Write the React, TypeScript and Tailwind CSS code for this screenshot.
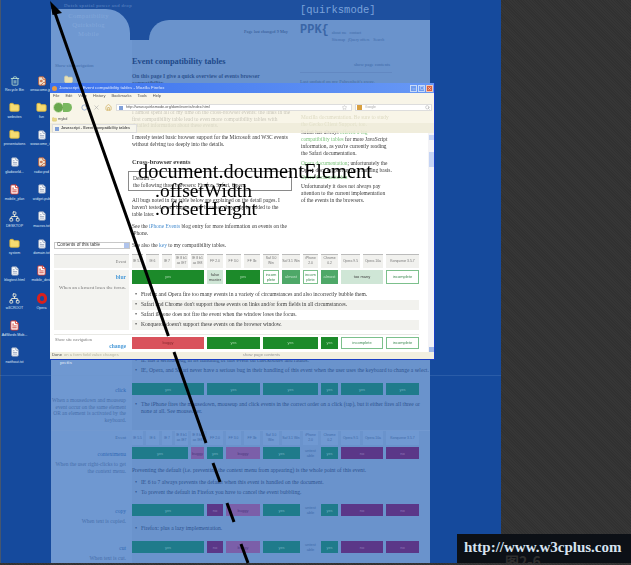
import { Folder, FileText, FileImage, Trash2, Network, Star, Search, Home, RotateCw, X, Minus, Square } from 'lucide-react';

type Kind = 'yes' | 'no' | 'buggy' | 'untest' | 'fail' | 'light' | 'almost' | 'incomplete';
type Cell = { span: number; kind: Kind; text: string };

const serif = 'font-["Liberation_Serif",serif]';
const grid15 = 'grid grid-cols-[11px_13px_10px_13px_13px_16px_15px_16px_16px_18px_15px_17px_19px_20px_33px] gap-x-[3px]';

const spans: Record<number, string> = {
  1: 'col-span-1',
  2: 'col-span-2',
  3: 'col-span-3',
  4: 'col-span-4',
  5: 'col-span-5',
};

const pageCell: Record<Kind, string> = {
  yes: 'bg-[#1f7b8b] text-[#6fb0c0]',
  no: 'bg-[#5b3788] text-[#9078b8]',
  buggy: 'bg-[#7b5fa9] text-[#4d3a80]',
  untest: 'text-[#3f6cab]',
  fail: 'bg-[#5b3788]',
  light: '',
  almost: '',
  incomplete: '',
};

const windowCell: Record<Kind, string> = {
  yes: 'bg-[#1c8a2a] text-[#a5d6aa]',
  no: 'bg-[#5b3788]',
  buggy: 'bg-[#7b5fa9]',
  untest: 'text-[#555]',
  fail: 'bg-[#d9525c] text-[#8a2a30]',
  light: 'bg-[#cfe6d6] text-[#444]',
  almost: 'bg-[#4ea868] text-[#c3e5cc]',
  incomplete: 'bg-white border border-[#7cc08c] text-[#3d8a52]',
};

const headers = ['IE 5.5', 'IE 6', 'IE 7', 'IE 8 b1 as IE7', 'IE 8 b1 as IE8', 'FF 2.0', 'FF 3.0', 'FF 3b', 'Saf 3.0 Win', 'Saf 3.1 Win', 'iPhone 2.0', 'Chrome 0.2', 'Opera 9.5', 'Opera 10a', 'Konqueror 3.5.7'];

const blurCells: Cell[] = [
  { span: 5, kind: 'yes', text: 'yes' },
  { span: 1, kind: 'light', text: 'false master' },
  { span: 2, kind: 'yes', text: 'yes' },
  { span: 1, kind: 'incomplete', text: 'incom plete' },
  { span: 1, kind: 'almost', text: 'almost' },
  { span: 1, kind: 'incomplete', text: 'incom plete' },
  { span: 1, kind: 'almost', text: 'almost' },
  { span: 2, kind: 'light', text: 'too many' },
  { span: 1, kind: 'incomplete', text: 'incomplete' },
];

const changeCells: Cell[] = [
  { span: 5, kind: 'fail', text: 'buggy' },
  { span: 3, kind: 'yes', text: 'yes' },
  { span: 3, kind: 'yes', text: 'yes' },
  { span: 1, kind: 'yes', text: 'yes' },
  { span: 2, kind: 'incomplete', text: 'incomplete' },
  { span: 1, kind: 'incomplete', text: 'incomplete' },
];

const clickCells: Cell[] = [
  { span: 5, kind: 'yes', text: 'yes' },
  { span: 3, kind: 'yes', text: 'yes' },
  { span: 3, kind: 'yes', text: 'yes' },
  { span: 1, kind: 'yes', text: 'yes' },
  { span: 2, kind: 'yes', text: 'yes' },
  { span: 1, kind: 'yes', text: 'yes' },
];

const contextCells: Cell[] = [
  { span: 4, kind: 'yes', text: 'yes' },
  { span: 1, kind: 'buggy', text: 'buggy' },
  { span: 1, kind: 'yes', text: 'yes' },
  { span: 2, kind: 'buggy', text: 'buggy' },
  { span: 2, kind: 'yes', text: 'yes' },
  { span: 1, kind: 'untest', text: 'untest able' },
  { span: 1, kind: 'yes', text: 'yes' },
  { span: 2, kind: 'no', text: 'no' },
  { span: 1, kind: 'no', text: 'no' },
];

const copyCells: Cell[] = [
  { span: 5, kind: 'yes', text: 'yes' },
  { span: 1, kind: 'no', text: 'no' },
  { span: 2, kind: 'buggy', text: 'buggy' },
  { span: 2, kind: 'yes', text: 'yes' },
  { span: 1, kind: 'untest', text: 'untest able' },
  { span: 1, kind: 'yes', text: 'yes' },
  { span: 2, kind: 'no', text: 'no' },
  { span: 1, kind: 'no', text: 'no' },
];

const desktopIcons: { label: string; kind: 'trash' | 'folder' | 'file' | 'image' | 'pdf' | 'net' | 'opera' | 'none' }[] = [
  { label: 'Recycle Bin', kind: 'trash' },
  { label: 'onsacome.jpg', kind: 'image' },
  { label: 'websites', kind: 'folder' },
  { label: 'fun', kind: 'folder' },
  { label: 'presentations', kind: 'folder' },
  { label: 'wwwcome_i...', kind: 'file' },
  { label: 'gladworld...', kind: 'file' },
  { label: 'radar.psd', kind: 'image' },
  { label: 'mobile_plan', kind: 'pdf' },
  { label: 'widget.pub', kind: 'file' },
  { label: 'DESKTOP', kind: 'net' },
  { label: 'macros.txt', kind: 'file' },
  { label: 'system', kind: 'folder' },
  { label: 'domain.txt', kind: 'file' },
  { label: 'blogtest.html', kind: 'file' },
  { label: 'mobile_desk', kind: 'pdf' },
  { label: 'w3CROOT', kind: 'net' },
  { label: 'Opera', kind: 'opera' },
  { label: 'AdWords Mob...', kind: 'pdf' },
  { label: '', kind: 'none' },
  { label: 'nwithout.txt', kind: 'file' },
];

function DesktopIcon({ label, kind }: { label: string; kind: string }) {
  return (
    <div className="flex flex-col items-center">
      <div className="h-[11px] flex items-center justify-center">
        {kind === 'trash' && <Trash2 className="w-[10px] h-[10px] text-[#bfe3d0]" />}
        {kind === 'folder' && <Folder className="w-[11px] h-[11px] text-[#e0b93c] fill-[#f6dc72]" />}
        {kind === 'file' && <FileText className="w-[10px] h-[10px] text-[#8a9ab8] fill-white" />}
        {kind === 'image' && <FileImage className="w-[10px] h-[10px] text-[#c05a30] fill-[#f0e4d0]" />}
        {kind === 'pdf' && <FileText className="w-[11px] h-[11px] text-[#d03a30] fill-white" />}
        {kind === 'net' && <Network className="w-[11px] h-[11px] text-[#e8e8d8]" />}
        {kind === 'opera' && <div className="w-[10px] h-[11px] rounded-full border-[3px] border-[#d8201c]" />}
      </div>
      <span className="mt-[2px] text-[3.6px] leading-[5px] text-[#dfe8f5] whitespace-nowrap font-['Liberation_Sans',sans-serif]">{label}</span>
    </div>
  );
}

function Bars({ cells, palette, height = 'h-[12px]' }: { cells: Cell[]; palette: Record<Kind, string>; height?: string }) {
  return (
    <div className={grid15}>
      {cells.map((c, i) => (
        <div key={i} className={`${spans[c.span]} ${palette[c.kind]} ${height} flex items-center justify-center text-center text-[4px] leading-[5px] font-['Liberation_Sans',sans-serif]`}>
          {c.text}
        </div>
      ))}
    </div>
  );
}

function HeaderCells({ tone }: { tone: string }) {
  return (
    <div className={grid15}>
      {headers.map((h) => (
        <div key={h} className={`${tone} h-[14px] flex items-center justify-center text-center text-[3.4px] leading-[5px] font-['Liberation_Sans',sans-serif]`}>
          {h}
        </div>
      ))}
    </div>
  );
}

function Bullet({ children, shaded }: { children: React.ReactNode; shaded?: string }) {
  return (
    <div className={`flex h-[10px] items-center pl-[3px] w-[287px] ${shaded ?? ''}`}>
      <span className="w-[6px] shrink-0 text-[6px]">•</span>
      <span className="whitespace-nowrap">{children}</span>
    </div>
  );
}

function PageRow({ title, desc, cells, className, children }: { title: string; desc: string[]; cells: Cell[]; className: string; children?: React.ReactNode }) {
  return (
    <div className={`flex ${className}`}>
      <div className="w-[75px] text-right pt-[3px] shrink-0 text-[#476fab]">
        <div className="text-[#2f68b4] text-[5.5px] leading-[8px] mb-[3px]">{title}</div>
        {desc.map((d) => (
          <div key={d} className="text-[5.4px] leading-[6.5px] whitespace-nowrap">{d}</div>
        ))}
      </div>
      <div className="ml-[6px] flex-1 min-w-0">
        <Bars cells={cells} palette={pageCell} />
        {children}
      </div>
    </div>
  );
}

function PageBehind() {
  return (
    <div className={`w-[379px] h-[563px] shrink-0 bg-[#6a93cc] flex flex-col overflow-hidden text-[5.6px] leading-[7px] text-[#2f5490] ${serif}`}>
      {/* header with the two curved tabs */}
      <div className="h-[40px] bg-[#1e509f] flex shrink-0">
        <div className="w-[79px] shrink-0 flex flex-col">
          <div className="h-[14px] pl-[13px] pt-[2px] text-[#5f88c4] text-[4.8px] tracking-[0.4px] whitespace-nowrap">Dutch spatial power and drop</div>
          <div className="flex-1 bg-[#6f98d1] rounded-tr-[24px] pt-[2px] pr-[4px] text-center text-[6.6px] leading-[9px] tracking-[0.3px] text-[#82a7da]">
            <div>Compatibility</div>
            <div>Quirksblog</div>
            <div>Mobile</div>
            <div>about</div>
          </div>
        </div>
        <div className="w-[19px] shrink-0" />
        <div className="flex-1 min-w-0 flex flex-col">
          <div className="h-[20px] pl-[151px] flex items-center text-[#7aa2da] text-[10.5px] font-['Liberation_Mono',monospace] whitespace-nowrap">[quirksmode]</div>
          <div className="h-[20px] bg-[#6a93cc] rounded-tl-[24px] flex items-start">
            <div className="w-[139px] shrink-0 pt-[9px] text-right text-[4.4px] leading-[6px] whitespace-nowrap">Page last changed 9 May</div>
            <div className="ml-[12px] shrink-0 pt-[2px] text-[#3a66a6] text-[12px] leading-[16px] font-['Liberation_Mono',monospace] font-bold">PPK&#123;</div>
            <div className="ml-[3px] pt-[9px] text-[4px] leading-[7px] whitespace-nowrap text-[#3f6aa8]">
              <div>about me &nbsp; contact</div>
              <div>Sitemap &nbsp; jQuery offers &nbsp;&nbsp; Search</div>
            </div>
          </div>
        </div>
      </div>
      {/* top of page, mostly under the window */}
      <div className="h-[315px] shrink-0 flex">
        <div className="w-[81px] shrink-0 bg-[#6f98d1] pl-[4px] pt-[22px] text-[#3f6aa8]">
          <div className="text-[4.6px]">Show site navigation</div>
          <Folder className="w-[9px] h-[9px] ml-[9px] mt-[6px] text-[#e0d8a8] fill-[#e8e0b4]" />
        </div>
        <div className="w-[165px] shrink-0 pt-[16px]">
          <div className="text-[8.4px] leading-[11px] font-bold text-[#1f4a8a] whitespace-nowrap">Event compatibility tables</div>
          <div className="mt-[6px] font-bold text-[5.5px] leading-[6.5px] whitespace-nowrap">On this page I give a quick overview of events browser</div>
          <div className="font-bold text-[5.5px] leading-[6.5px]">compatibility.</div>
        </div>
        <div className="flex-1 min-w-0 pl-[3px] pt-[21px] text-[#3f6aa8]">
          <div className="text-right pr-[40px] text-[4.6px] whitespace-nowrap">show page contents</div>
          <div className="w-[92px] h-px mt-[4px] bg-[#6288c2]" />
          <div className="mt-[5px] text-[4.8px] whitespace-nowrap">Last updated on my Fahrenheit's away.</div>
        </div>
      </div>
      {/* last bullets of the row behind the window's lower edge */}
      <div className="h-[20px] shrink-0 flex bg-[#6a93cc] overflow-hidden">
        <div className="w-[81px] shrink-0 bg-[#6f98d1] pl-[9px] text-[#e6eef8] text-[5px] pt-[4px]">prefix</div>
        <div className="flex-1 min-w-0 whitespace-nowrap">
          <Bullet>IE has a serious bug in its handling of this event on checkboxes and radios.</Bullet>
          <Bullet>IE, Opera, and Safari never have a serious bug in their handling of this event when the user uses the keyboard to change a select.</Bullet>
        </div>
      </div>
      {/* table rows */}
      <div className="flex-1 min-h-0 pt-[8px] bg-[linear-gradient(90deg,#6f98d1_81px,#6a93cc_81px)]">
        <PageRow
          title="click"
          desc={['When a mousedown and mouseup', 'event occur on the same element', 'OR an element is activated by the', 'keyboard.']}
          cells={clickCells}
          className="h-[47px]"
        >
          <div className="pt-[6px] pl-[3px] flex">
            <span className="w-[6px] text-[6px]">•</span>
            <div className="w-[280px]">The iPhone fires the mousedown, mouseup and click events in the correct order on a click (tap), but it either fires all three or none at all. See mouseover.</div>
          </div>
        </PageRow>
        <div className="h-[17px] flex border-t border-[#7299d0]">
          <div className="w-[75px] text-right text-[#3f6aa8] text-[4.6px] leading-[14px]">Event</div>
          <div className="ml-[6px] flex-1"><HeaderCells tone="bg-[#7099d2] text-[#3f6aa8]" /></div>
        </div>
        <PageRow
          title="contextmenu"
          desc={['When the user right-clicks to get', 'the context menu.']}
          cells={contextCells}
          className="h-[57px]"
        >
          <div className="pt-[8px] whitespace-nowrap">Preventing the default (i.e. preventing the context menu from appearing) is the whole point of this event.</div>
          <div className="pt-[3px]">
            <Bullet>IE 6 to 7 always prevents the default when this event is handled on the document.</Bullet>
            <Bullet>To prevent the default in Firefox you have to cancel the event bubbling.</Bullet>
          </div>
        </PageRow>
        <PageRow title="copy" desc={['When text is copied.']} cells={copyCells} className="h-[37px]">
          <div className="pt-[7px]">
            <Bullet>Firefox: plus a lazy implementation.</Bullet>
          </div>
        </PageRow>
        <PageRow title="cut" desc={['When text is cut.']} cells={copyCells} className="h-[22px]" />
      </div>
    </div>
  );
}

function FirefoxWindow() {
  return (
    <div className={`absolute left-[50px] top-[83px] w-[385px] h-[277px] flex flex-col border-r-[1.5px] border-b-[1.5px] border-[#1a3fc4] overflow-hidden ${serif}`}>
      {/* title bar */}
      <div className="h-[10px] shrink-0 bg-[linear-gradient(90deg,#3b72ee,#6798f5)] flex items-center pl-[2px] pr-[1px]">
        <div className="w-[5px] h-[5px] rounded-full bg-[#e89a40] mr-[2px]" />
        <span className="text-[4.4px] text-[#dfe9fb] whitespace-nowrap font-['Liberation_Sans',sans-serif]">Javascript - Event compatibility tables - Mozilla Firefox</span>
        <div className="ml-auto flex gap-[1px]">
          <div className="w-[7px] h-[7px] bg-[#6f9cf0] border border-[#c8daf8] flex items-end justify-center"><Minus className="w-[4px] h-[4px] text-white" /></div>
          <div className="w-[7px] h-[7px] bg-[#6f9cf0] border border-[#c8daf8] flex items-center justify-center"><Square className="w-[4px] h-[4px] text-white" /></div>
          <div className="w-[7px] h-[7px] bg-[#d8623f] border border-[#f0c8b8] flex items-center justify-center"><X className="w-[5px] h-[5px] text-white" /></div>
        </div>
      </div>

      {/* page content, the chrome lies over the top part of it */}
      <div className="relative flex-1 min-h-0 bg-white flex flex-col text-[5.4px] leading-[6.7px] text-[#3a3a3a] pl-[82px] pr-[15px] pt-[16px]">
        <div className="flex gap-[1px]">
          <div className="w-[165px] shrink-0">
            <div className="whitespace-nowrap text-[#3a3a3a]">
              <div>I almost spent all of my time on the cross-browser events: the links in the</div>
              <div>first compatibility table lead to even more compatibility tables with</div>
              <div>detailed information about these events.</div>
            </div>
            <div className="mt-[5px] whitespace-nowrap">
              <div>I merely tested basic browser support for the Microsoft and W3C events</div>
              <div>without delving too deeply into the details.</div>
            </div>
            <div className="mt-[11px] font-bold text-[6.4px] whitespace-nowrap">Cross-browser events</div>
            <div className="-ml-[4px] w-[164px] mt-[6px] h-[20px] border border-[#8a8a8a] pl-[4px] pt-[3px] whitespace-nowrap">
              <div>Default ...</div>
              <div>the following three browsers: Firefox, Safari, Opera.</div>
            </div>
            <div className="mt-[6px] whitespace-nowrap">
              <div>All bugs noted in the table below are explained on the detail pages. I</div>
              <div>haven't tested every bug in every browser; they may be added to the</div>
              <div>table later.</div>
            </div>
            <div className="mt-[6px] whitespace-nowrap">
              <div>See the <span className="text-[#4a8fd0]">iPhone Events</span> blog entry for more information on events on the</div>
              <div>iPhone.</div>
            </div>
          </div>
          <div className="flex-1 min-w-0 pl-[3px] pt-[5px] text-[#3a3a3a] whitespace-nowrap">
            <div className="text-[#8f8f60]">Mozilla documentation. Be sure to study</div>
            <div className="text-[#8f8f60]">the Gecko Client Support, too.</div>
            <div className="mt-[2px]">Safari has always <span className="text-[#7cc47c]">offered a big</span></div>
            <div><span className="text-[#7cc47c]">compatibility tables</span> for more JavaScript</div>
            <div>information, as you're currently reading</div>
            <div>the Safari documentation.</div>
            <div className="mt-[4px]"><span className="text-[#7cc47c]">Opera documentation</span>; unfortunately the</div>
            <div>Opera docs support up on a running basis.</div>
            <div className="text-[#7cc47c]">Opera documentation</div>
            <div className="mt-[3px]">Unfortunately it does not always pay</div>
            <div>attention to the current implementation</div>
            <div>of the events in the browsers.</div>
          </div>
        </div>

        <div className="-ml-[78px] mt-[5px] flex items-center h-[8px] shrink-0">
          <div className="w-[76px] h-[7px] border border-[#c8c8c8] flex items-center pl-[2px] text-[4.6px] justify-between font-['Liberation_Sans',sans-serif]">
            Contents of this table
            <span className="w-[5px] h-[5px] bg-[#b0c4ec] block" />
          </div>
          <span className="ml-[2px] whitespace-nowrap">See also the <span className="text-[#4a8fd0]">key</span> to my compatibility tables.</span>
        </div>

        <div className="-ml-[78px] mt-[4px] flex shrink-0">
          <div className="w-[75px] h-[14px] bg-[#f1f1ee] border-t border-[#d8d8d8] text-right pr-[3px] text-[4.4px] leading-[13px] text-[#777]">Event</div>
          <div className="ml-[3px]"><HeaderCells tone="bg-[#f1f1ee] border-t border-[#bbb] text-[#777]" /></div>
        </div>

        <div className="-ml-[78px] mt-[2px] flex shrink-0 h-[60px] text-[5.5px]">
          <div className="w-[75px] bg-[#f3f3f0] text-right pr-[3px] pt-[4px] text-[#777]">
            <div className="text-[#4a9ad8] font-bold text-[5.6px] leading-[7px]">blur</div>
            <div className="mt-[4px] text-[5px] whitespace-nowrap">When an element loses the focus.</div>
          </div>
          <div className="ml-[3px]">
            <Bars cells={blurCells} palette={windowCell} height="h-[14px]" />
            <div className="mt-[6px] flex flex-col">
              <Bullet>Firefox and Opera fire too many events in a variety of circumstances and also incorrectly bubble them.</Bullet>
              <Bullet shaded="bg-[#f2f2ee]">Safari and Chrome don't support these events on links and/or form fields in all circumstances.</Bullet>
              <Bullet>Safari iPhone does not fire the event when the window loses the focus.</Bullet>
              <Bullet shaded="bg-[#f2f2ee]">Konqueror doesn't support these events on the browser window.</Bullet>
            </div>
          </div>
        </div>

        <div className="-ml-[78px] mt-[4px] flex shrink-0 border-t border-[#e8e8e4] pt-[2px]">
          <div className="w-[75px] pl-[1px] text-[#777]">
            <div className="text-[4.4px] whitespace-nowrap">Show site navigation</div>
            <div className="text-right pr-[3px] text-[#4a9ad8] font-bold text-[5.6px]">change</div>
          </div>
          <div className="ml-[3px]">
            <Bars cells={changeCells} palette={windowCell} />
          </div>
        </div>

        {/* browser chrome over the content */}
        <div className="absolute left-0 right-0 top-0 h-[40px] flex flex-col bg-[#f5f2e0]/75 text-[#555] font-['Liberation_Sans',sans-serif]">
          <div className="h-[7px] flex items-center gap-[6px] pl-[3px] text-[4px] whitespace-nowrap">
            <span>File</span><span>Edit</span><span>View</span><span>History</span><span>Bookmarks</span><span>Tools</span><span>Help</span>
          </div>
          <div className="h-[15px] flex items-center pl-[3px] pr-[2px]">
            <div className="w-[11px] h-[11px] rounded-full bg-[#6aa84f] border border-[#d8e8c0]" />
            <div className="w-[9px] h-[9px] rounded-r-full bg-[#7ab860] -ml-[1px]" />
            <RotateCw className="w-[7px] h-[7px] ml-[9px] text-[#5f84c8]" />
            <X className="w-[7px] h-[7px] ml-[5px] text-[#aaa]" />
            <Home className="w-[7px] h-[7px] ml-[5px] text-[#c8a040]" />
            <div className="ml-[4px] h-[7px] w-[236px] bg-white border border-[#ddd] flex items-center pl-[2px] text-[3.8px] whitespace-nowrap">
              <span className="w-[4px] h-[4px] bg-[#7f9fd8] mr-[3px]" />
              http://www.quirksmode.org/dom/events/index.html
              <Star className="ml-auto mr-[4px] w-[5px] h-[5px] text-[#aaa]" />
            </div>
            <div className="ml-[3px] h-[7px] flex-1 bg-white border border-[#ddd] flex items-center pl-[1px] text-[3.4px] text-[#aaa]">
              <span className="w-[5px] h-[5px] bg-[#d8a040] mr-[3px]" />
              Google
              <Search className="ml-auto mr-[1px] w-[5px] h-[5px] text-[#999]" />
            </div>
          </div>
          <div className="h-[8px] flex items-center pl-[2px] text-[3.8px] gap-[1px]">
            <Folder className="w-[5px] h-[5px] text-[#d8c060] fill-[#e8d888]" />
            mybd
          </div>
          <div className="h-[10px] flex items-end bg-[#e8e6d0]/50 pl-[2px]">
            <div className="w-[85px] h-[9px] flex items-center bg-[#f6f5ec] border border-[#ddd] pl-[2px] text-[3.8px] font-bold whitespace-nowrap">
              <span className="w-[4px] h-[4px] bg-[#7f9fd8] mr-[2px]" />
              Javascript - Event compatibility tables
            </div>
          </div>
        </div>

        {/* scrollbar */}
        <div className="absolute right-0 top-[40px] bottom-0 w-[6px] bg-[#f3f3f6] flex flex-col items-center">
          <div className="w-[5px] h-[5px] mt-[2px] bg-[#c5d4f4]" />
          <div className="w-[5px] h-[15px] mt-[12px] bg-[#c5d4f4]" />
          <div className="w-[5px] h-[5px] mt-auto bg-[#9fb8e8]" />
        </div>
      </div>

      {/* status bar */}
      <div className="h-[7px] shrink-0 bg-[#f1efe0] flex items-center pl-[2px] text-[4.2px] text-[#555] font-['Liberation_Sans',sans-serif] whitespace-nowrap">
        Done <span className="ml-[2px] text-[#b8b8a4]">on a form field value changes</span>
        <span className="ml-[124px] text-[#999]">show page contents</span>
      </div>
    </div>
  );
}

export default function App() {
  return (
    <div className="relative w-[631px] h-[565px] overflow-hidden bg-[#343434] bg-[repeating-linear-gradient(45deg,#363636_0px,#363636_1px,#313131_1px,#313131_2px)]">
      <div className="flex h-[563px] w-[501px] blur-[0.3px]">
        <div className="w-[1px] shrink-0 bg-[#45566f]" />
        <div className="w-[50px] shrink-0 bg-[#154a9d] pt-[75px]">
          <div className="grid grid-cols-2 auto-rows-[27.2px] w-[54px]">
            {desktopIcons.map((ic, i) => (
              <DesktopIcon key={i} label={ic.label} kind={ic.kind} />
            ))}
          </div>
        </div>
        <PageBehind />
        <div className="w-[71px] shrink-0 bg-[#154a9d]" />
      </div>

      {/* thin line across the capture */}
      <div className="absolute left-0 top-[375px] w-[501px] h-px bg-[#6a93cc]/25" />

      <div className="absolute inset-0 blur-[0.3px]">
        <FirefoxWindow />
      </div>

      <svg className="absolute inset-0" width="631" height="565" viewBox="0 0 631 565">
        <polygon points="50,1 62,13 52.5,15" fill="#000" />
        <g stroke="#000" strokeWidth="3" fill="none">
          <line x1="55" y1="13" x2="168.4" y2="336" />
          <line x1="174" y1="352" x2="206" y2="443" />
          <line x1="213" y1="463" x2="220" y2="482" />
          <line x1="227" y1="503" x2="234" y2="522" />
          <line x1="241" y1="544" x2="248" y2="563" />
        </g>
      </svg>

      {/* labels pasted on top of the capture */}
      <div className={`absolute left-[138px] top-[160px] text-[20.4px] leading-[23px] text-black whitespace-nowrap ${serif}`}>document.documentElement</div>
      <div className={`absolute left-[155px] top-[180px] text-[19.5px] leading-[21px] text-black whitespace-nowrap ${serif}`}>.offsetWidth</div>
      <div className={`absolute left-[155px] top-[198px] text-[19.5px] leading-[21px] text-black whitespace-nowrap ${serif}`}>.offsetHeight</div>

      {/* watermark */}
      <div className="absolute left-[457px] top-[534px] w-[174px] h-[29px] bg-[#0c1016] pt-[3px] pl-[7px] overflow-hidden">
        <div className="text-[15px] leading-[20px] font-bold text-[#d7e3f0] whitespace-nowrap font-['Liberation_Serif',serif]">http://www.w3cplus.com</div>
        <div className="pl-[41px] -mt-[4px] text-[14px] leading-[16px] font-bold text-[#2e2e2e] font-['Noto_Sans_CJK_SC',sans-serif]">图2-6</div>
      </div>
    </div>
  );
}
